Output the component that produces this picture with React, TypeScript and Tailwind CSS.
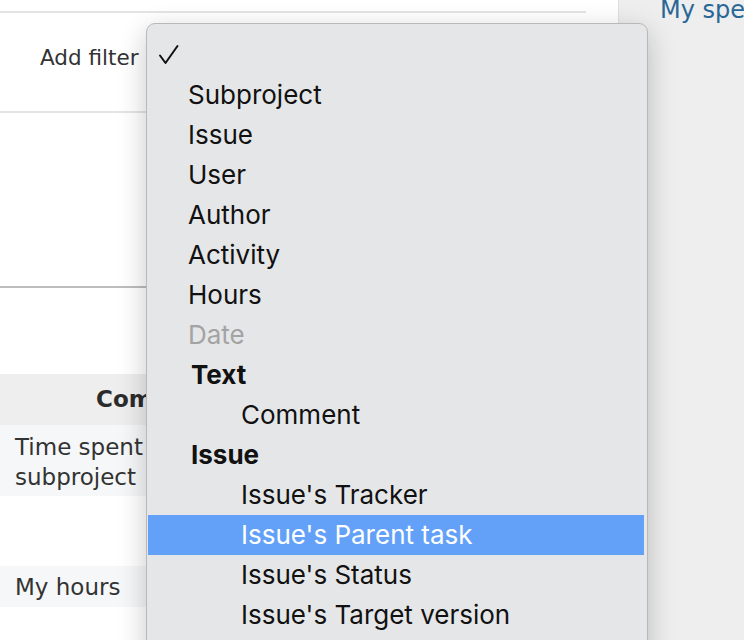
import React from "react";

type Item = {
  label: string;
  kind?: "check" | "item" | "disabled" | "group" | "sub";
  active?: boolean;
};

const items: Item[] = [
  { label: "", kind: "check" },
  { label: "Subproject" },
  { label: "Issue" },
  { label: "User" },
  { label: "Author" },
  { label: "Activity" },
  { label: "Hours" },
  { label: "Date", kind: "disabled" },
  { label: "Text", kind: "group" },
  { label: "Comment", kind: "sub" },
  { label: "Issue", kind: "group" },
  { label: "Issue's Tracker", kind: "sub" },
  { label: "Issue's Parent task", kind: "sub", active: true },
  { label: "Issue's Status", kind: "sub" },
  { label: "Issue's Target version", kind: "sub" },
];

function MenuRow({ item }: { item: Item }) {
  const kind = item.kind ?? "item";
  return (
    <div
      className={`ml-[1px] mr-[3px] flex h-[40px] items-center text-[26px] leading-[40px] ${
        item.active ? "bg-[#63a1f9] text-white" : "text-[#111]"
      }`}
    >
      {kind === "check" && (
        <svg
          className="ml-[10px] h-[22px] w-[22px]"
          viewBox="0 0 22 22"
          fill="none"
          stroke="#111"
          strokeWidth={2}
          strokeLinecap="round"
          strokeLinejoin="round"
        >
          <path d="M2 11.5 L7.5 19 L19.5 2" />
        </svg>
      )}
      {kind === "item" && <span className="pl-[40px]">{item.label}</span>}
      {kind === "disabled" && (
        <span className="pl-[40px] text-[#a3a3a3]">{item.label}</span>
      )}
      {kind === "group" && (
        <span className="pl-[43px] font-bold">{item.label}</span>
      )}
      {kind === "sub" && <span className="pl-[93px]">{item.label}</span>}
    </div>
  );
}

export default function App() {
  return (
    <div className="relative flex h-[640px] w-[744px] overflow-hidden bg-white font-['DejaVu_Sans',Verdana,sans-serif] text-[#333]">
      {/* Main content */}
      <div className="w-[618px] shrink-0 pr-[32px]">
        <div className="h-[11px]" />
        <div className="border-t-2 border-[#e4e4e4]" />
        <div className="flex h-[98px] items-center pl-[40px] pb-[8px] text-[21.5px]">
          Add filter
        </div>
        <div className="border-t-2 border-[#e4e4e4]" />
        <div className="h-[173px]" />
        <div className="border-t-2 border-[#bdbdbd]" />
        <div className="h-[86px]" />

        {/* Table */}
        <div className="text-[23px]">
          <div className="flex h-[51px] items-center bg-[#eeeeee] pl-[96px] font-bold text-[#2b2b2b]">
            Comment
          </div>
          <div className="flex h-[71px] items-center bg-[#f6f7f8] pl-[15px] pt-[2px] leading-[30px]">
            <div>
              Time spent on
              <br />
              subproject
            </div>
          </div>
          <div className="h-[70px] bg-white" />
          <div className="flex h-[41px] items-center bg-[#f6f7f8] pl-[15px] pt-[2px] leading-[27px]">
            My hours
          </div>
        </div>
      </div>

      {/* Sidebar */}
      <div className="flex-1 border-l border-[#dedede] bg-[#eeeeee] pl-[41px]">
        <div className="-mt-[4px] whitespace-nowrap text-[24px] leading-[28px] text-[#2a6797]">
          My spent time
        </div>
      </div>

      {/* Dropdown menu */}
      <div className="absolute left-[146px] top-[23px] h-[660px] w-[502px] rounded-[9px] border border-[#b9b9b9] bg-[#e5e6e8] pt-[11px] font-['Inter',sans-serif] shadow-[0_8px_28px_rgba(0,0,0,0.22)]">
        {items.map((item, i) => (
          <MenuRow key={i} item={item} />
        ))}
      </div>
    </div>
  );
}
